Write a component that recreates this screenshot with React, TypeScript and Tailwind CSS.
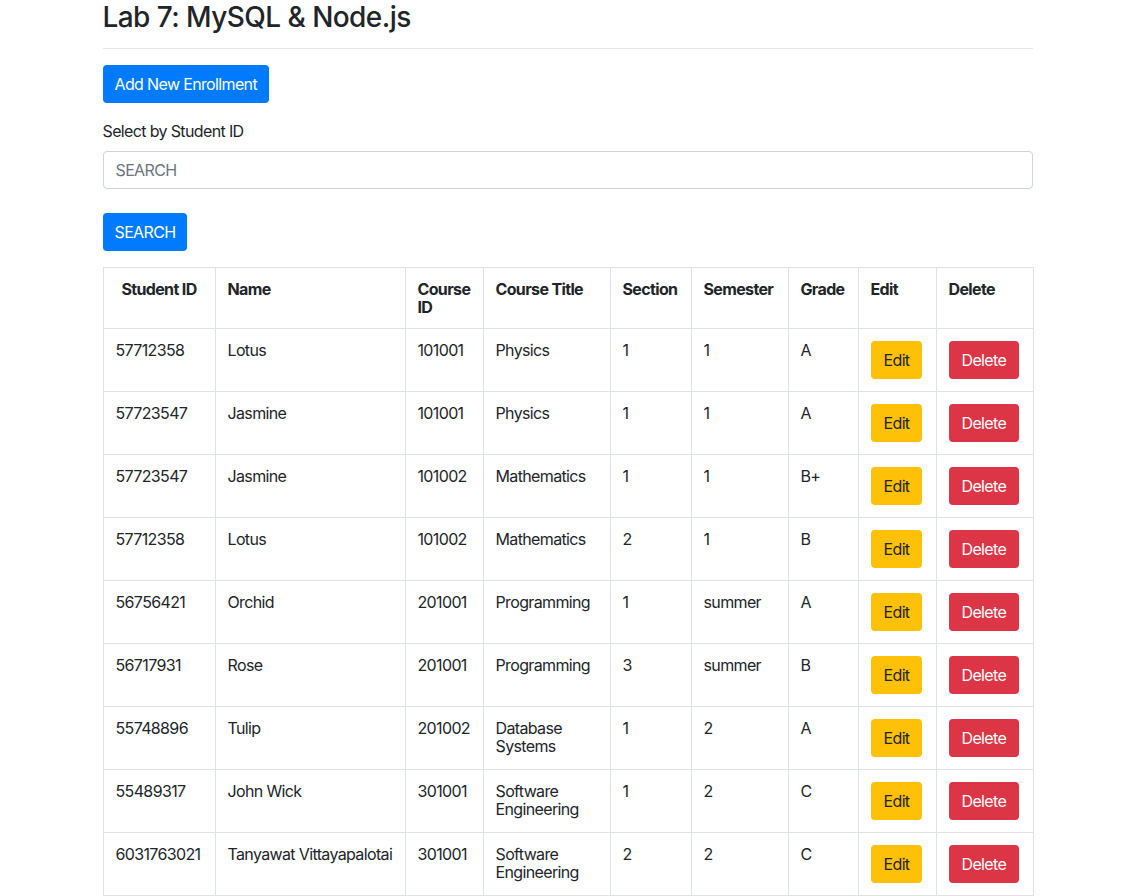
import React from "react";

const rows = [
  ["57712358", "Lotus", "101001", "Physics", "1", "1", "A"],
  ["57723547", "Jasmine", "101001", "Physics", "1", "1", "A"],
  ["57723547", "Jasmine", "101002", "Mathematics", "1", "1", "B+"],
  ["57712358", "Lotus", "101002", "Mathematics", "2", "1", "B"],
  ["56756421", "Orchid", "201001", "Programming", "1", "summer", "A"],
  ["56717931", "Rose", "201001", "Programming", "3", "summer", "B"],
  ["55748896", "Tulip", "201002", "Database Systems", "1", "2", "A"],
  ["55489317", "John Wick", "301001", "Software Engineering", "1", "2", "C"],
  ["6031763021", "Tanyawat Vittayapalotai", "301001", "Software Engineering", "2", "2", "C"],
];

export default function App() {
  return (
    <div
      className="min-h-screen bg-white text-[#212529] tracking-[-0.04em]"
      style={{ fontFamily: "Inter, 'Noto Sans', 'Liberation Sans', sans-serif" }}
    >
      <div className="w-[930px] mx-auto">
        <h3 className="text-[28px] leading-[34px] font-medium m-0 tracking-[-0.02em]">Lab 7: MySQL &amp; Node.js</h3>
        <hr className="mt-[14px] border-0 border-t border-[#e5e5e5]" />
        <button className="mt-[16px] h-[38px] px-[12px] rounded-[4px] bg-[#007bff] text-white text-[16px] leading-6">
          Add New Enrollment
        </button>
        <div className="mt-[16px] text-[16px] leading-6">Select by Student ID</div>
        <input
          className="mt-[8px] block w-full h-[38px] px-[12px] border border-[#ced4da] rounded-[4px] text-[16px] placeholder:text-[#6c757d] outline-none"
          placeholder="SEARCH"
        />
        <button className="mt-[24px] h-[38px] px-[12px] rounded-[4px] bg-[#007bff] text-white text-[16px] leading-6">
          SEARCH
        </button>
        <table className="mt-[16px] w-[930px] table-fixed border-collapse text-[16px] leading-[18px]">
          <colgroup>
            <col className="w-[112px]" />
            <col className="w-[190px]" />
            <col className="w-[78px]" />
            <col className="w-[127px]" />
            <col className="w-[81px]" />
            <col className="w-[97px]" />
            <col className="w-[70px]" />
            <col className="w-[78px]" />
            <col className="w-[97px]" />
          </colgroup>
          <thead>
            <tr>
              <th className="border border-[#dee2e6] p-[12px] text-center align-top font-bold">Student ID</th>
              <th className="border border-[#dee2e6] p-[12px] text-left align-top font-bold">Name</th>
              <th className="border border-[#dee2e6] p-[12px] text-left align-top font-bold">Course ID</th>
              <th className="border border-[#dee2e6] p-[12px] text-left align-top font-bold">Course Title</th>
              <th className="border border-[#dee2e6] p-[12px] text-left align-top font-bold">Section</th>
              <th className="border border-[#dee2e6] p-[12px] text-left align-top font-bold">Semester</th>
              <th className="border border-[#dee2e6] p-[12px] text-left align-top font-bold">Grade</th>
              <th className="border border-[#dee2e6] p-[12px] text-left align-top font-bold">Edit</th>
              <th className="border border-[#dee2e6] p-[12px] text-left align-top font-bold">Delete</th>
            </tr>
          </thead>
          <tbody>
            {rows.map((r, i) => (
              <tr key={i}>
                {r.map((c, j) => (
                  <td key={j} className="border border-[#dee2e6] p-[12px] align-top">
                    {c}
                  </td>
                ))}
                <td className="border border-[#dee2e6] p-[12px] align-top">
                  <button className="h-[38px] px-[13px] rounded-[4px] bg-[#ffc107] text-[#212529] leading-6">Edit</button>
                </td>
                <td className="border border-[#dee2e6] p-[12px] align-top">
                  <button className="h-[38px] px-[13px] rounded-[4px] bg-[#dc3545] text-white leading-6">Delete</button>
                </td>
              </tr>
            ))}
          </tbody>
        </table>
      </div>
    </div>
  );
}
